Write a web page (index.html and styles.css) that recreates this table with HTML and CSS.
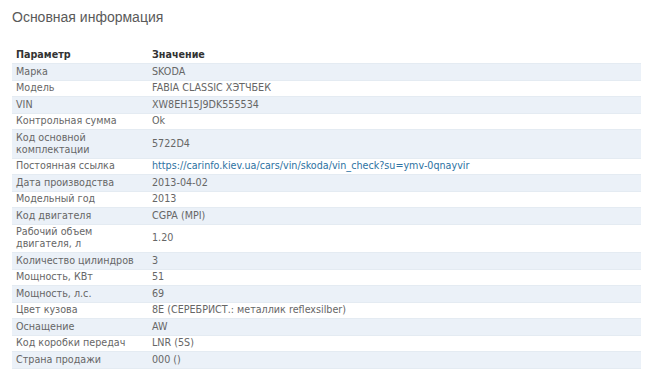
FILE: index.html
```html
<!DOCTYPE html>
<html lang="ru">
<head>
<meta charset="utf-8">
<link rel="stylesheet" href="styles.css">
</head>
<body>
<div class="page">
  <h2 class="title">Основная информация</h2>
  <table class="info">
    <thead>
      <tr><th class="c1">Параметр</th><th>Значение</th></tr>
    </thead>
    <tbody>
      <tr><td>Марка</td><td>SKODA</td></tr>
      <tr><td>Модель</td><td>FABIA CLASSIC ХЭТЧБЕК</td></tr>
      <tr><td>VIN</td><td>XW8EH15J9DK555534</td></tr>
      <tr><td>Контрольная сумма</td><td>Ok</td></tr>
      <tr class="tall"><td>Код основной<br>комплектации</td><td>5722D4</td></tr>
      <tr><td>Постоянная ссылка</td><td><a href="#">https://carinfo.kiev.ua/cars/vin/skoda/vin_check?su=ymv-0qnayvir</a></td></tr>
      <tr><td>Дата производства</td><td>2013-04-02</td></tr>
      <tr><td>Модельный год</td><td>2013</td></tr>
      <tr><td>Код двигателя</td><td>CGPA (MPI)</td></tr>
      <tr class="tall"><td>Рабочий объем<br>двигателя, л</td><td>1.20</td></tr>
      <tr><td>Количество цилиндров</td><td>3</td></tr>
      <tr><td>Мощность, КВт</td><td>51</td></tr>
      <tr><td>Мощность, л.с.</td><td>69</td></tr>
      <tr><td>Цвет кузова</td><td>8E (СЕРЕБРИСТ.: металлик reflexsilber)</td></tr>
      <tr><td>Оснащение</td><td>AW</td></tr>
      <tr><td>Код коробки передач</td><td>LNR (5S)</td></tr>
      <tr><td>Страна продажи</td><td>000 ()</td></tr>
    </tbody>
  </table>
</div>
</body>
</html>
```
FILE: styles.css
```css
html, body {
  margin: 0;
  padding: 0;
  background: #ffffff;
}
.page {
  padding: 8px 9px 0 12px;
}
.title {
  margin: 0 0 20px 0;
  font-family: "Liberation Sans", Arial, sans-serif;
  font-weight: normal;
  font-size: 14px;
  line-height: 18px;
  color: #5a5a5a;
}
.info {
  width: 629px;
  border-collapse: collapse;
  font-family: "DejaVu Sans", Verdana, sans-serif;
  font-size: 9.6px;
  color: #666;
}
.info th {
  text-align: left;
  font-weight: bold;
  color: #333;
  height: 17px;
  padding: 0 4px;
  line-height: 12px;
}
.info th.c1 {
  width: 128px;
}
.info td {
  padding: 1.75px 4px;
  line-height: 12px;
  vertical-align: middle;
}
.info tbody tr {
  border-top: 1px solid #e4ebf2;
}
.info tbody tr:nth-child(odd) {
  background: #ebf1f8;
}
.info tbody tr:last-child {
  border-bottom: 1px solid #e4ebf2;
}
.info td a {
  color: #2d72a2;
  text-decoration: none;
}
```
